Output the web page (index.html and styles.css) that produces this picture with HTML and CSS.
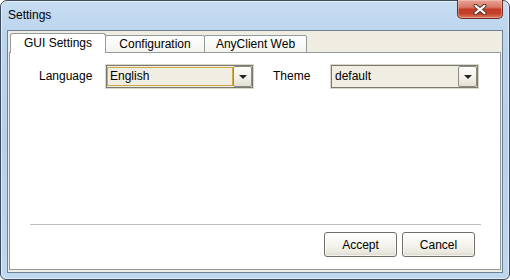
FILE: index.html
```html
<!DOCTYPE html>
<html>
<head>
<meta charset="utf-8">
<link rel="stylesheet" href="styles.css">
</head>
<body>
<div class="window">
  <div class="titlebar">
    <span class="title">Settings</span>
    <div class="close">
      <svg width="14" height="11" viewBox="0 0 14 11">
        <path d="M2.5 1.8 L11.5 9.2 M11.5 1.8 L2.5 9.2" stroke="#4a2a26" stroke-width="4" stroke-linecap="round" fill="none"/>
        <path d="M2.5 1.8 L11.5 9.2 M11.5 1.8 L2.5 9.2" stroke="#ffffff" stroke-width="2.2" stroke-linecap="round" fill="none"/>
      </svg>
    </div>
  </div>
  <div class="client">
    <div class="tabs">
      <div class="tab tab-gui selected">GUI Settings</div>
      <div class="tab tab-conf">Configuration</div>
      <div class="tab tab-any">AnyClient Web</div>
    </div>
    <div class="panel">
      <div class="form">
        <span class="lbl lbl-lang">Language</span>
        <div class="combo">
          <div class="combo-in">
            <div class="field focused">English</div>
            <div class="btn"><span class="arrow"></span></div>
          </div>
        </div>
        <span class="lbl lbl-theme">Theme</span>
        <div class="combo">
          <div class="combo-in">
            <div class="field">default</div>
            <div class="btn"><span class="arrow"></span></div>
          </div>
        </div>
      </div>
      <div class="sep"></div>
      <div class="actions">
        <button class="pbtn">Accept</button>
        <button class="pbtn">Cancel</button>
      </div>
    </div>
  </div>
</div>
</body>
</html>
```
FILE: styles.css
```css
html, body {
  margin: 0;
  padding: 0;
  width: 510px;
  height: 280px;
  overflow: hidden;
  background: #ffffff;
  font-family: "Liberation Sans", Arial, sans-serif;
  font-size: 12px;
  color: #000;
}

.window {
  box-sizing: border-box;
  width: 510px;
  height: 280px;
  border: 1px solid #3d4a5a;
  border-radius: 7px 7px 6px 6px;
  background: linear-gradient(to bottom, #c6dcf1 0%, #bcd5ee 12%, #b6d0ec 50%, #bfd7ef 100%);
  box-shadow: inset 0 0 0 1px rgba(255, 255, 255, 0.55);
  padding: 0 6px 6px 6px;
  display: flex;
  flex-direction: column;
}

.titlebar {
  height: 29px;
  display: flex;
  align-items: flex-start;
}

.title {
  margin-left: 1px;
  line-height: 29px;
  font-size: 12px;
  color: #000;
}

.close {
  margin-left: auto;
  box-sizing: border-box;
  width: 46px;
  height: 19px;
  margin-top: -1px;
  border: 1px solid #6e2a22;
  border-top: none;
  border-radius: 0 0 5px 5px;
  background: linear-gradient(to bottom, #e8a597 0%, #d77765 40%, #c23c27 52%, #c3402b 75%, #da7a5c 100%);
  box-shadow: inset 0 0 0 1px rgba(255, 220, 210, 0.4);
  display: flex;
  align-items: center;
  justify-content: center;
}

.close svg {
  display: block;
}

.client {
  flex: 1;
  display: flex;
  flex-direction: column;
  border: 1px solid #6f8194;
  background: #efece1;
  padding: 0 1px 2px 1px;
}

.tabs {
  display: flex;
  align-items: flex-end;
  padding: 2px 0 0 1px;
  margin-bottom: -1px;
  position: relative;
  z-index: 1;
}

.tab {
  box-sizing: border-box;
  height: 18px;
  padding: 0;
  text-align: center;
  line-height: 16px;
  border: 1px solid #919b9c;
  margin-left: -1px;
  border-radius: 2px 2px 0 0;
  background: linear-gradient(to bottom, #ffffff, #f4f3ee);
  white-space: nowrap;
}

.tab-gui {
  width: 96px;
}

.tab-conf {
  width: 100px;
}

.tab-any {
  width: 103px;
}

.tab:first-child {
  margin-left: 0;
}

.tab.selected {
  height: 20px;
  line-height: 19px;
  border-bottom: none;
  background: #ffffff;
  position: relative;
  z-index: 2;
  border-radius: 3px 3px 0 0;
}

.panel {
  flex: 1;
  display: flex;
  flex-direction: column;
  background: #ffffff;
  border: 1px solid #919b9c;
}

.form {
  flex: 1;
  display: flex;
  align-items: flex-start;
  padding: 11px 0 0 29px;
}

.lbl {
  height: 25px;
  line-height: 25px;
}

.lbl-lang {
  width: 66px;
}

.lbl-theme {
  width: 57px;
  margin-left: 19px;
}

.combo {
  box-sizing: border-box;
  width: 149px;
  height: 25px;
  border: 1px solid #d9d6ca;
}

.combo-in {
  box-sizing: border-box;
  height: 100%;
  border: 1px solid #7b7a70;
  background: #f0eee3;
  display: flex;
}

.field {
  flex: 1;
  box-sizing: border-box;
  margin: 1px 0;
  border: 1px solid transparent;
  padding-left: 2px;
  line-height: 17px;
  white-space: nowrap;
}

.field.focused {
  border-color: #cfa945;
}

.btn {
  box-sizing: border-box;
  width: 19px;
  height: 21px;
  border: 1px solid #8d8b82;
  border-radius: 2px;
  background: linear-gradient(to bottom, #fdfdfb 0%, #f1efe7 60%, #e3e0d3 100%);
  display: flex;
  align-items: center;
  justify-content: center;
}

.arrow {
  width: 0;
  height: 0;
  border-left: 4px solid transparent;
  border-right: 4px solid transparent;
  border-top: 4px solid #222;
  margin-top: 1px;
}

.sep {
  height: 1px;
  margin: 0 19px 0 20px;
  background: #bdbdbd;
}

.actions {
  display: flex;
  justify-content: flex-end;
  gap: 5px;
  padding: 7px 25px 12px 0;
}

.pbtn {
  box-sizing: border-box;
  width: 73px;
  height: 25px;
  margin: 0;
  padding: 0;
  border: 1px solid #6f6e64;
  border-radius: 3px;
  background: linear-gradient(to bottom, #ffffff 0%, #f5f4ef 50%, #eae8de 85%, #d9d5c7 100%);
  box-shadow: inset 0 0 0 1px rgba(255, 255, 255, 0.7);
  font-family: "Liberation Sans", Arial, sans-serif;
  font-size: 12px;
  color: #000;
}
```
